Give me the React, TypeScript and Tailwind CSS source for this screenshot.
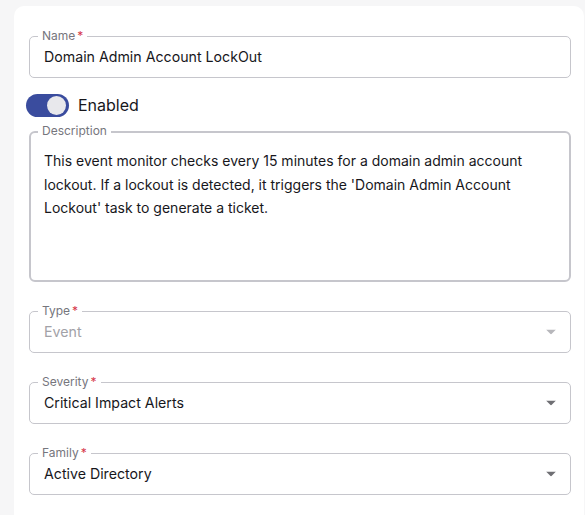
const font = { fontFamily: 'Inter, "Noto Sans", sans-serif' }

function Caret({ muted }: { muted?: boolean }) {
  return (
    <svg width="10" height="5" viewBox="0 0 10 5" className="absolute right-[14px] top-1/2 -translate-y-1/2">
      <path d="M0 0h10L5 5z" fill={muted ? '#b7b7bb' : '#6f6f74'} />
    </svg>
  )
}

function Outlined({
  label,
  required,
  disabled,
  select,
  className,
  children,
}: {
  label: string
  required?: boolean
  disabled?: boolean
  select?: boolean
  className?: string
  children: React.ReactNode
}) {
  return (
    <div className={`relative h-[42px] rounded-[5px] border border-[#c6c6cc] ${className ?? ''}`}>
      <span className="absolute -top-[9px] left-[8px] bg-white px-[4px] text-[12px] leading-[16px] text-[#76767d]">
        {label}
        {required && <span className="ml-[2px] text-[#d6364a]">*</span>}
      </span>
      <div
        className={`flex h-full items-center pl-[14px] pr-[40px] text-[14.2px] ${
          disabled ? 'text-[#a2a2a8]' : 'text-[#17171c]'
        }`}
      >
        {children}
      </div>
      {select && <Caret muted={disabled} />}
    </div>
  )
}

export default function App() {
  return (
    <div className="min-h-[515px] bg-[#f6f6f7] pl-[14px] pr-[1px] pt-[6px]" style={font}>
      <div className="h-[509px] rounded-t-[10px] bg-white pl-[15px] pr-[13px] pt-[30px]">
        <Outlined label="Name" required>
          Domain Admin Account LockOut
        </Outlined>

        <div className="mt-[15px] flex items-center gap-[9px]">
          <div className="-ml-[3px] flex h-[23px] w-[43px] items-center justify-end rounded-full bg-[#3a4c9e] pr-[3px]">
            <div className="h-[19px] w-[19px] rounded-full bg-[#e8e8ec]" />
          </div>
          <span className="text-[16px] text-[#17171c]">Enabled</span>
        </div>

        <div className="relative mt-[14px] h-[151px] rounded-[6px] border-2 border-[#c6c6cc]">
          <span className="absolute -top-[10px] left-[7px] bg-white px-[4px] text-[12px] leading-[16px] text-[#76767d]">
            Description
          </span>
          <p className="pl-[13px] pr-[14px] pt-[16px] text-[14px] leading-[23.5px] text-[#17171c]">
            This event monitor checks every 15 minutes for a domain admin account lockout. If a lockout is detected, it
            triggers the 'Domain Admin Account Lockout' task to generate a ticket.
          </p>
        </div>

        <Outlined label="Type" required disabled select className="mt-[29px]">
          Event
        </Outlined>
        <Outlined label="Severity" required select className="mt-[29px]">
          Critical Impact Alerts
        </Outlined>
        <Outlined label="Family" required select className="mt-[29px]">
          Active Directory
        </Outlined>
      </div>
    </div>
  )
}
